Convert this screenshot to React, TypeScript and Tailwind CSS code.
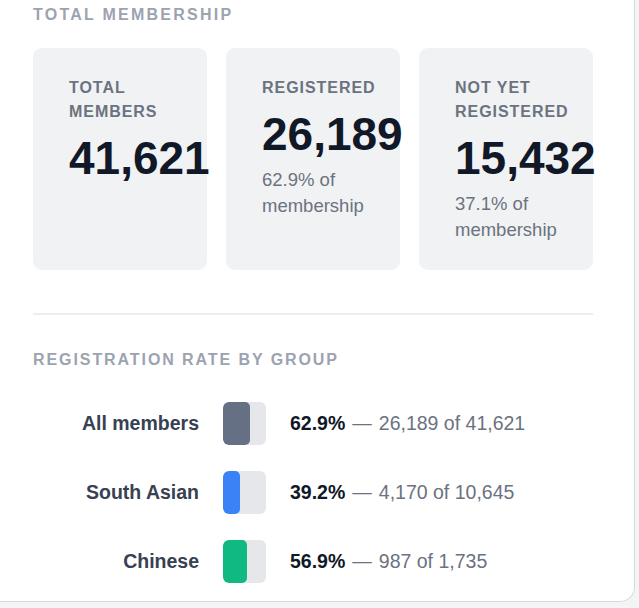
const stats = [
  { label: "Total members", value: "41,621", note: null },
  { label: "Registered", value: "26,189", note: "62.9% of membership" },
  { label: "Not yet registered", value: "15,432", note: "37.1% of membership" },
];

const groups = [
  { name: "All members", pct: 62.9, registered: "26,189", total: "41,621", fill: "bg-[#667085]" },
  { name: "South Asian", pct: 39.2, registered: "4,170", total: "10,645", fill: "bg-[#3b82f6]" },
  { name: "Chinese", pct: 56.9, registered: "987", total: "1,735", fill: "bg-[#10b981]" },
];

function StatCard({ label, value, note }: { label: string; value: string; note: string | null }) {
  return (
    <div className="h-[222px] rounded-[9px] bg-[#f1f2f4] pl-9 pt-7">
      <div className="w-[104px] text-[16px] leading-6 font-bold uppercase tracking-[0.06em] text-[#6b7280]">
        {label}
      </div>
      <div className="mt-[11px] whitespace-nowrap text-[46px] leading-[46px] font-bold text-[#111827]">
        {value}
      </div>
      {note && (
        <div className="mt-[10px] w-[110px] text-[18.5px] leading-[26px] text-[#6b7280]">{note}</div>
      )}
    </div>
  );
}

function GroupRow({ name, pct, registered, total, fill }: (typeof groups)[number]) {
  return (
    <div className="flex h-[43px] items-center">
      <div className="w-[166px] text-right text-[19.5px] font-bold text-[#374151]">{name}</div>
      <div className="ml-[24px] flex h-[43px] w-[43px] overflow-hidden rounded-[6px] bg-[#e5e7eb]">
        <div className={`h-full rounded-[5px] ${fill}`} style={{ width: `${pct}%` }} />
      </div>
      <div className="ml-[24px] whitespace-nowrap text-[19.5px] text-[#6b7280]">
        <span className="font-bold text-[#111827]">{pct.toFixed(1)}%</span>
        <span className="mx-[7px]">—</span>
        {registered} of {total}
      </div>
    </div>
  );
}

export default function App() {
  return (
    <div
      className="h-[608px] w-[639px] overflow-hidden bg-[#f3f4f6]"
      style={{ fontFamily: '"Liberation Sans", Arial, sans-serif' }}
    >
      <div className="h-[602px] w-[635px] rounded-br-[15px] border-r border-b border-[#d6dade] bg-white pl-[33px] pt-[5px]">
        <h2 className="text-[16px] leading-5 font-bold uppercase tracking-[0.14em] text-[#9ca3af]">
          Total membership
        </h2>

        <div className="mt-[23px] grid w-[560px] grid-cols-3 gap-[19px]">
          {stats.map((s) => (
            <StatCard key={s.label} {...s} />
          ))}
        </div>

        <div className="mt-[43px] h-[2px] w-[560px] bg-[#eceef1]" />

        <h2 className="mt-[35px] text-[16px] leading-5 font-bold uppercase tracking-[0.12em] text-[#9ca3af]">
          Registration rate by group
        </h2>

        <div className="mt-[32px] flex flex-col gap-[26px]">
          {groups.map((g) => (
            <GroupRow key={g.name} {...g} />
          ))}
        </div>
      </div>
    </div>
  );
}
